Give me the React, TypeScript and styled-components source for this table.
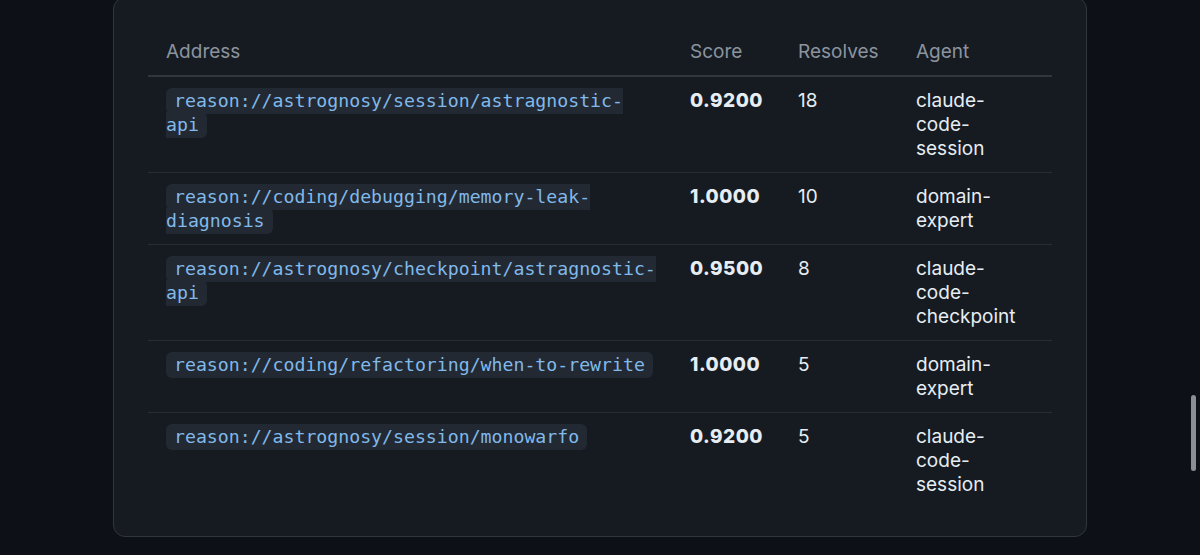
import React from "react";
import styled, { createGlobalStyle } from "styled-components";

const Global = createGlobalStyle`
  html, body { margin: 0; padding: 0; background: #0d1117; }
  body { font-family: Inter, "Noto Sans", "Liberation Sans", sans-serif; overflow: hidden; }
`;

const Page = styled.div`
  position: relative;
  width: 1200px;
  height: 555px;
  overflow: hidden;
  background: #0d1117;
  display: flex;
  align-items: flex-start;
  padding-left: 113px;
  box-sizing: border-box;
`;

const Card = styled.div`
  box-sizing: border-box;
  width: 974px;
  height: 540px;
  margin-top: -3px;
  background: #161b22;
  border: 1px solid #30363d;
  border-radius: 12px;
  padding: 30px 34px 28px 34px;
`;

const Table = styled.table`
  width: 904px;
  border-collapse: collapse;
  table-layout: fixed;
  color: #e6edf3;
  font-size: 19px;
  line-height: 24px;
`;

const HeadCell = styled.th<{ $right?: number }>`
  text-align: left;
  font-weight: 400;
  color: #8b949e;
  padding: 12px ${(p) => p.$right ?? 18}px 11px 18px;
  border-bottom: 2px solid #30363d;
`;

const Row = styled.tr<{ $last?: boolean }>`
  border-bottom: ${(p) => (p.$last ? "none" : "1px solid #262c34")};
`;

const Cell = styled.td<{ $right?: number }>`
  vertical-align: top;
  padding: 12px ${(p) => p.$right ?? 18}px 11px 18px;
`;

const Code = styled.code`
  font-family: "DejaVu Sans Mono", "Liberation Mono", monospace;
  font-size: 18.2px;
  line-height: 24px;
  vertical-align: top;
  color: #80b9ea;
  background: #232932;
  border-radius: 6px;
  padding: 2px 8px 3px;
  word-break: normal;
`;

const Score = styled.span`
  font-weight: 800;
  letter-spacing: 0.5px;
`;

const Scrollbar = styled.div`
  position: absolute;
  right: 4px;
  top: 395px;
  width: 5px;
  height: 76px;
  border-radius: 3px;
  background: #8b8e93;
`;

const rows = [
  { addr: "reason://astrognosy/session/astragnostic-api", score: "0.9200", res: "18", agent: "claude-code-session" },
  { addr: "reason://coding/debugging/memory-leak-diagnosis", score: "1.0000", res: "10", agent: "domain-expert" },
  { addr: "reason://astrognosy/checkpoint/astragnostic-api", score: "0.9500", res: "8", agent: "claude-code-checkpoint" },
  { addr: "reason://coding/refactoring/when-to-rewrite", score: "1.0000", res: "5", agent: "domain-expert" },
  { addr: "reason://astrognosy/session/monowarfo", score: "0.9200", res: "5", agent: "claude-code-session" },
];

export default function App() {
  return (
    <>
      <Global />
      <Page>
        <Card>
          <Table>
            <colgroup>
              <col style={{ width: 524 }} />
              <col style={{ width: 108 }} />
              <col style={{ width: 118 }} />
              <col style={{ width: 154 }} />
            </colgroup>
            <thead>
              <tr>
                <HeadCell>Address</HeadCell>
                <HeadCell>Score</HeadCell>
                <HeadCell>Resolves</HeadCell>
                <HeadCell $right={28}>Agent</HeadCell>
              </tr>
            </thead>
            <tbody>
              {rows.map((r, i) => (
                <Row key={i} $last={i === rows.length - 1}>
                  <Cell>
                    <Code>{r.addr}</Code>
                  </Cell>
                  <Cell>
                    <Score>{r.score}</Score>
                  </Cell>
                  <Cell>{r.res}</Cell>
                  <Cell $right={28}>{r.agent}</Cell>
                </Row>
              ))}
            </tbody>
          </Table>
        </Card>
        <Scrollbar />
      </Page>
    </>
  );
}
